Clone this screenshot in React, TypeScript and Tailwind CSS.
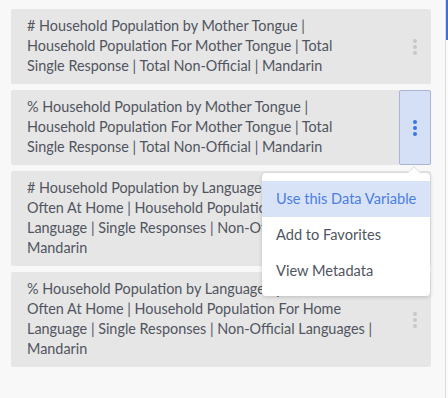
import { useState } from "react";

type Variable = {
  id: number;
  lines: string[];
};

// labels are kept in the same line breaks the panel shows
const variables: Variable[] = [
  {
    id: 1,
    lines: [
      "# Household Population by Mother Tongue |",
      "Household Population For Mother Tongue | Total",
      "Single Response | Total Non-Official | Mandarin",
    ],
  },
  {
    id: 2,
    lines: [
      "% Household Population by Mother Tongue |",
      "Household Population For Mother Tongue | Total",
      "Single Response | Total Non-Official | Mandarin",
    ],
  },
  {
    id: 3,
    lines: [
      "# Household Population by Language Spoken Most",
      "Often At Home | Household Population For Home",
      "Language | Single Responses | Non-Official Languages |",
      "Mandarin",
    ],
  },
  {
    id: 4,
    lines: [
      "% Household Population by Language Spoken Most",
      "Often At Home | Household Population For Home",
      "Language | Single Responses | Non-Official Languages |",
      "Mandarin",
    ],
  },
];

const menuItems = ["Use this Data Variable", "Add to Favorites", "View Metadata"];

function KebabDots({ active }: { active: boolean }) {
  const dot = active ? "bg-[#3a74e6]" : "bg-[#c8c8c8]";
  return (
    <div className="flex flex-col items-center gap-[2px]">
      <span className={`block h-[4px] w-[4px] rounded-full ${dot}`} />
      <span className={`block h-[4px] w-[4px] rounded-full ${dot}`} />
      <span className={`block h-[4px] w-[4px] rounded-full ${dot}`} />
    </div>
  );
}

function VariableMenu() {
  return (
    <div className="absolute right-[1px] top-[calc(100%+8px)] z-20 w-[168px] rounded-[4px] bg-white pb-[7px] pt-[8px] text-[14.6px] shadow-[0_1px_4px_rgba(0,0,0,0.18)]">
      {/* little pointer up to the kebab button */}
      <div className="absolute -top-[5px] right-[11px] h-[10px] w-[10px] rotate-45 border-l border-t border-[#e4e4e4] bg-white" />
      {menuItems.map((item, i) => (
        <div
          key={item}
          className={
            i === 0
              ? "relative flex h-[36px] items-center whitespace-nowrap bg-[#d9e3f8] px-[14px] text-[#4a7ee3]"
              : "relative flex h-[36px] items-center whitespace-nowrap px-[14px] text-[#51555f]"
          }
        >
          {item}
        </div>
      ))}
    </div>
  );
}

export default function App() {
  const [openId] = useState(2);

  return (
    <div
      className="flex h-[398px] w-[448px] bg-[#f8f8f8] text-[14.4px] leading-[20px]"
      style={{ fontFamily: "Lato, 'Liberation Sans', sans-serif" }}
    >
      <div className="flex w-[445px] flex-col gap-[6px] pl-[11px] pr-[14px] pt-[9px]">
        {variables.map((v) => {
          const open = v.id === openId;
          return (
            <div key={v.id} className="relative flex rounded-[2px] bg-[#e6e6e6]">
              <p className="min-w-0 flex-1 overflow-hidden pb-[8px] pl-[16px] pr-[16px] pt-[7px] text-[#51555f]">
                {v.lines.map((line) => (
                  <span key={line} className="block whitespace-nowrap">
                    {line}
                  </span>
                ))}
              </p>
              <button
                className={
                  open
                    ? "flex w-[32px] shrink-0 items-center justify-center rounded-[2px] border border-[#a9b5d6] bg-[#d5dff5]"
                    : "flex w-[32px] shrink-0 items-center justify-center"
                }
              >
                <KebabDots active={open} />
              </button>
              {open && <VariableMenu />}
            </div>
          );
        })}
      </div>

      {/* edge of the neighbouring panel */}
      <div className="flex w-[3px] flex-col border-l border-[#dcdcdc] bg-[#fbfbfb]">
        <div className="h-[40px] bg-[#3c6fd8]" />
      </div>
    </div>
  );
}
